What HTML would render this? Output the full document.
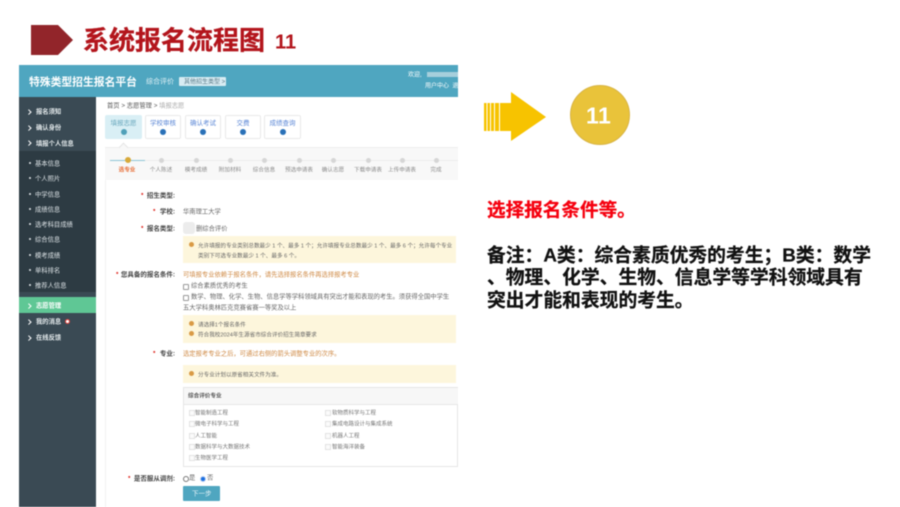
<!DOCTYPE html>
<html lang="zh"><head><meta charset="utf-8">
<style>
html,body{margin:0;padding:0;background:#fff}
#p{position:relative;width:900px;height:507px;overflow:hidden;background:#fff;font-family:"Liberation Sans","Noto Sans CJK SC",sans-serif}
#p div,#p span.t{position:absolute;white-space:nowrap}
.t{line-height:1;transform:translateY(1.5px)}
#s{position:absolute;left:0;top:0;width:900px;height:507px;filter:blur(.55px)}
.m{font-size:6.3px;font-weight:700;color:#e4eaec;line-height:10px}
.sub{font-size:6.3px;color:#dfe5e8;line-height:10px}
.a{width:2.6px;height:2.6px;border-top:1.3px solid #fff;border-right:1.3px solid #fff;transform:rotate(45deg)}
.d{width:2px;height:2px;border-radius:50%;background:#dfe5e8}
.tab{background:#fff;border:1px solid #eaeaea;box-sizing:border-box;height:24px;top:115px;border-radius:2px}
.tab i{position:absolute;left:0;right:0;top:3px;text-align:center;font:normal 6.5px/9px "Liberation Sans","Noto Sans CJK SC",sans-serif;color:#5b87d6}
.tab b{position:absolute;left:50%;margin-left:-3px;top:13px;width:6px;height:6px;border-radius:50%;background:#2a71b8}
.sd{width:5px;height:5px;border-radius:50%;background:#d6d6d6;top:157.5px}
.sl{font-size:5.6px;color:#8b8b8b;top:165px;line-height:8px;text-align:center;width:36px}
.l{font-size:6.5px;font-weight:700;color:#444;line-height:10px;text-align:right;right:725px}
.r{color:#e2413a;font-size:7px;font-weight:700;line-height:10px;transform:translateY(1.5px)}
.x{font-size:6.3px;color:#666;line-height:10px}
.y{background:#fdf6dc;left:183px;width:273px}
.o{width:5px;height:5px;border-radius:50%;background:#d99a45;left:189px}
.c{font-size:5.6px;color:#666;line-height:8px}
.or{font-size:6.3px;color:#cf8a45;line-height:10px}
.cb{width:4px;height:4px;border:1px solid #e2e2e2;background:#fbfbfb;left:189px}
.cb2{width:4px;height:4px;border:1px solid #e2e2e2;background:#fbfbfb;left:325px}
.i{font-size:5.5px;color:#777;line-height:8px}
.B{font-size:18.8px;font-weight:700;color:#111;left:487px;line-height:22px;-webkit-text-stroke:.25px #111}
</style></head><body><div id="p"><div id="s">

<svg style="position:absolute;left:0;top:0" width="900" height="507">
<polygon points="31,25 58,25 73,40 58,55 31,55" fill="#92252a"/>
<g fill="#f7c300">
<rect x="484" y="103" width="2.5" height="28"/><rect x="487.500" y="103" width="2.5" height="28"/><rect x="491" y="103" width="3" height="28"/><rect x="495" y="103" width="4" height="28"/>
<polygon points="500,103 511,103 511,92 546,117 511,141 511,131 500,131"/>
</g>
<circle cx="600" cy="115" r="29.5" fill="#e9c33a" stroke="#d8b444" stroke-width="1"/>
</svg>

<div class="t" style="left:83px;top:25px;font-size:26px;font-weight:700;color:#b3151c;line-height:28px;-webkit-text-stroke:.3px #b3151c">系统报名流程图</div>
<div class="t" style="left:275px;top:30px;font-size:20px;font-weight:700;color:#b3151c;line-height:22px">11</div>

<div style="left:19px;top:65px;width:439px;height:32px;background:#4fa6c0"></div>
<div style="left:19px;top:97px;width:77px;height:410px;background:#3a4a54"></div>
<div style="left:19px;top:151px;width:77px;height:141px;background:#2d3b43"></div>
<div style="left:19px;top:297px;width:77px;height:16px;background:#5fc795"></div>

<div class="t" style="left:29px;top:75px;font-size:10.8px;font-weight:700;color:#fff;line-height:12px">特殊类型招生报名平台</div>
<div class="t" style="left:146px;top:76px;font-size:7px;color:#dff0f5;line-height:9px">综合评价</div>
<div style="left:179px;top:77px;width:47px;height:9px;background:#d8ecf3;border-radius:1px"></div>
<div class="t" style="left:184px;top:76.500px;font-size:6px;line-height:9px;color:#5a7a88">其他招生类型 &gt;</div>
<div class="t" style="left:408px;top:70px;font-size:6px;color:#fff;line-height:8px">欢迎,</div>
<div style="left:427px;top:72px;width:31px;height:5px;background:#a6cfdc"></div>
<div class="t" style="left:425px;top:81px;font-size:6px;color:#fff;line-height:8px">用户中心 &nbsp;退</div>

<div class="a" style="left:27px;top:110px"></div><div class="t m" style="left:36px;top:106px">报名须知</div>
<div class="a" style="left:27px;top:126px"></div><div class="t m" style="left:36px;top:122px">确认身份</div>
<div class="a" style="left:27px;top:141px"></div><div class="t m" style="left:36px;top:138px">填报个人信息</div>

<div class="d" style="left:29px;top:162px"></div><div class="t sub" style="left:35px;top:158px">基本信息</div>
<div class="d" style="left:29px;top:177px"></div><div class="t sub" style="left:35px;top:173px">个人照片</div>
<div class="d" style="left:29px;top:193px"></div><div class="t sub" style="left:35px;top:189px">中学信息</div>
<div class="d" style="left:29px;top:208px"></div><div class="t sub" style="left:35px;top:204px">成绩信息</div>
<div class="d" style="left:29px;top:223px"></div><div class="t sub" style="left:35px;top:219px">选考科目成绩</div>
<div class="d" style="left:29px;top:238px"></div><div class="t sub" style="left:35px;top:234px">综合信息</div>
<div class="d" style="left:29px;top:254px"></div><div class="t sub" style="left:35px;top:250px">模考成绩</div>
<div class="d" style="left:29px;top:269px"></div><div class="t sub" style="left:35px;top:265px">单科排名</div>
<div class="d" style="left:29px;top:284px"></div><div class="t sub" style="left:35px;top:280px">推荐人信息</div>

<div class="a" style="left:27px;top:304px"></div><div class="t m" style="left:36px;top:300px;color:#fff">志愿管理</div>
<div class="a" style="left:27px;top:320px"></div><div class="t m" style="left:36px;top:316px">我的消息</div>
<div style="left:65px;top:319px;width:3px;height:3px;border-radius:50%;background:#fff;border:1px solid #e2413a"></div>
<div class="a" style="left:27px;top:336px"></div><div class="t m" style="left:36px;top:332px">在线反馈</div>

<div class="t" style="left:107px;top:100px;font-size:6.3px;color:#555;line-height:10px">首页 &gt; 志愿管理 &gt; <span style="color:#aaa">填报志愿</span></div>

<div class="tab" style="left:105px;width:37px;background:#d9eff5;border-color:#d9eff5"><i style="color:#6aa8bd">填报志愿</i><b style="background:#4fa0b8"></b></div>
<div class="tab" style="left:145px;width:36px"><i>学校审核</i><b></b></div>
<div class="tab" style="left:185px;width:36px"><i>确认考试</i><b></b></div>
<div class="tab" style="left:225px;width:36px"><i>交费</i><b></b></div>
<div class="tab" style="left:264px;width:37px"><i>成绩查询</i><b></b></div>

<div style="left:105px;top:147px;width:353px;height:33px;background:#f8f8f8;border-top:1px solid #eee;box-sizing:border-box"></div>
<div style="left:120px;top:144px;width:6px;height:6px;background:#f8f8f8;border-top:1px solid #e6e6e6;border-left:1px solid #e6e6e6;transform:rotate(45deg)"></div>
<div style="left:110px;top:159.5px;width:348px;height:1px;background:#ececec"></div>
<div style="left:110px;top:159.5px;width:35px;height:1px;background:#8ec5d6"></div>
<div style="left:124.500px;top:157px;width:6px;height:6px;border-radius:50%;background:#d8a93a"></div>
<div class="sd" style="left:159px"></div><div class="sd" style="left:194px"></div><div class="sd" style="left:228px"></div><div class="sd" style="left:262px"></div><div class="sd" style="left:297px"></div><div class="sd" style="left:331px"></div><div class="sd" style="left:366px"></div><div class="sd" style="left:400px"></div><div class="sd" style="left:434px"></div>
<div class="t sl" style="left:109px;color:#e8703a;font-weight:700">选专业</div>
<div class="t sl" style="left:143px">个人陈述</div>
<div class="t sl" style="left:178px">模考成绩</div>
<div class="t sl" style="left:212px">附加材料</div>
<div class="t sl" style="left:246px">综合信息</div>
<div class="t sl" style="left:281px">预选申请表</div>
<div class="t sl" style="left:315px">确认志愿</div>
<div class="t sl" style="left:350px">下载申请表</div>
<div class="t sl" style="left:384px">上传申请表</div>
<div class="t sl" style="left:418px">完成</div>

<div style="left:105px;top:180px;width:1px;height:327px;background:#f2f2f2"></div>

<div class="t l" style="top:190px">招生类型:</div><div class="r" style="left:141px;top:189px">•</div>
<div class="t l" style="top:206px">学校:</div><div class="r" style="left:153px;top:205px">•</div>
<div class="t x" style="left:183px;top:206px">华南理工大学</div>
<div class="t l" style="top:223px">报名类型:</div><div class="r" style="left:141px;top:222px">•</div>
<div style="left:183px;top:222px;width:12px;height:12px;background:#ececec;border-radius:3px"></div>
<div class="t x" style="left:196px;top:223px">删综合评价</div>

<div class="y" style="top:236px;height:27px"></div>
<div class="o" style="top:242px"></div>
<div class="t c" style="left:198px;top:241px">允许填报的专业类别总数最少 1 个、最多 1 个；允许填报专业总数最少 1 个、最多 6 个；允许每个专业</div>
<div class="t c" style="left:198px;top:251px">类别下可选专业数最少 1 个、最多 6 个。</div>

<div class="t l" style="top:269px">您具备的报名条件:</div><div class="r" style="left:116px;top:268px">•</div>
<div class="t or" style="left:183px;top:269px">可填报专业依赖于报名条件，请先选择报名条件再选择报考专业</div>
<div style="left:183px;top:284px;width:4px;height:4px;border:1px solid #999;border-radius:1px"></div>
<div class="t x" style="left:191px;top:280px">综合素质优秀的考生</div>
<div style="left:183px;top:295px;width:4px;height:4px;border:1px solid #999;border-radius:1px"></div>
<div class="t x" style="left:191px;top:291px">数学、物理、化学、生物、信息学等学科领域具有突出才能和表现的考生。须获得全国中学生</div>
<div class="t x" style="left:183px;top:302px">五大学科奥林匹克竞赛省赛一等奖及以上</div>

<div class="y" style="top:315px;height:28px"></div>
<div class="o" style="top:321px"></div>
<div class="t c" style="left:198px;top:320px">请选择1个报名条件</div>
<div class="o" style="top:331px"></div>
<div class="t c" style="left:198px;top:330px">符合我校2024年生源省市综合评价招生简章要求</div>

<div class="t l" style="top:348px">专业:</div><div class="r" style="left:153px;top:347px">•</div>
<div class="t or" style="left:183px;top:348px">选定报考专业之后，可通过右侧的箭头调整专业的次序。</div>

<div class="y" style="top:365px;height:18px"></div>
<div class="o" style="top:371px"></div>
<div class="t c" style="left:198px;top:370px">分专业计划以原省相关文件为准。</div>

<div style="left:183px;top:387px;width:275px;height:80px;box-sizing:border-box;border:1px solid #e6e6e6;background:#fff"></div>
<div style="left:184px;top:388px;width:274px;height:16px;background:#f7f7f7;border-bottom:1px solid #e6e6e6"></div>
<div class="t" style="left:188px;top:391px;font-size:5.6px;font-weight:700;color:#555;line-height:8px">综合评价专业</div>

<div class="cb" style="top:410px"></div><div class="t i" style="left:195px;top:408px">智能制造工程</div>
<div class="cb" style="top:421px"></div><div class="t i" style="left:195px;top:419px">微电子科学与工程</div>
<div class="cb" style="top:433px"></div><div class="t i" style="left:195px;top:431px">人工智能</div>
<div class="cb" style="top:444px"></div><div class="t i" style="left:195px;top:442px">数据科学与大数据技术</div>
<div class="cb" style="top:455px"></div><div class="t i" style="left:195px;top:453px">生物医学工程</div>
<div class="cb2" style="top:410px"></div><div class="t i" style="left:332px;top:408px">软物质科学与工程</div>
<div class="cb2" style="top:421px"></div><div class="t i" style="left:332px;top:419px">集成电路设计与集成系统</div>
<div class="cb2" style="top:433px"></div><div class="t i" style="left:332px;top:431px">机器人工程</div>
<div class="cb2" style="top:444px"></div><div class="t i" style="left:332px;top:442px">智能海洋装备</div>

<div class="t l" style="top:473px">是否服从调剂:</div><div class="r" style="left:128px;top:472px">•</div>
<div style="left:183px;top:476px;width:4px;height:4px;border:1px solid #777;border-radius:50%"></div>
<div class="t x" style="left:189px;top:472px">是</div>
<div style="left:200px;top:476px;width:4px;height:4px;border:1px solid #bcd0f0;border-radius:50%;background:#1b6fe0"></div>
<div class="t x" style="left:207px;top:472px">否</div>
<div style="left:183px;top:486px;width:37px;height:15px;background:#4fa6c0;border-radius:1px"></div>
<div class="t" style="left:192px;top:487px;font-size:6.5px;line-height:12px;color:#e8f4f8">下一步</div>

<div class="t" style="left:586px;top:100.5px;font-size:23px;font-weight:700;color:#fff;line-height:26px;letter-spacing:.5px">11</div>
<div class="t" style="left:487px;top:198px;font-size:18.6px;font-weight:700;color:#f5000f;line-height:22px;-webkit-text-stroke:.25px #f5000f">选择报名条件等。</div>
<div class="t B" style="top:243px">备注：A类：综合素质优秀的考生；B类：数学</div>
<div class="t B" style="top:265px">、物理、化学、生物、信息学等学科领域具有</div>
<div class="t B" style="top:288px">突出才能和表现的考生。</div>

</div></div></body></html>
